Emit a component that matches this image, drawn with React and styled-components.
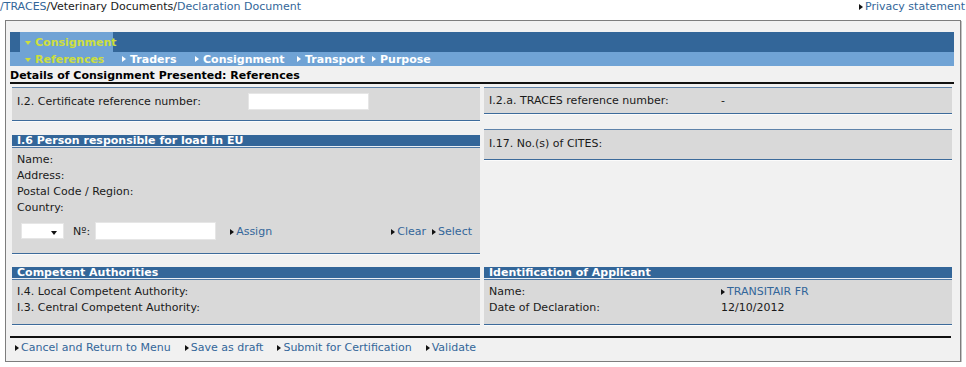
import React from 'react';
import styled, { createGlobalStyle, css } from 'styled-components';

const GlobalStyle = createGlobalStyle`
	body {
		margin: 0;
		background: #ffffff;
		font-family: 'DejaVu Sans', Verdana, sans-serif;
		font-size: 11px;
		color: #1a1a1a;
	}
`;

const LINK = '#336699';
const DARK = '#336699';
const LIGHT = '#70a3d5';
const ACTIVE = '#cddf3c';

const arrowRight = (color) => css`
	content: '';
	display: inline-block;
	width: 0;
	height: 0;
	border-top: 3.5px solid transparent;
	border-bottom: 3.5px solid transparent;
	border-left: 4px solid ${color};
	margin-right: 2px;
	vertical-align: 0px;
`;

const App = () => {
	return (
		<>
			<GlobalStyle />
			<TopBar>
				<Crumbs>
					<Link>/TRACES</Link>/Veterinary Documents/
					<Link>Declaration Document</Link>
				</Crumbs>
				<ArrowLink>Privacy statement</ArrowLink>
			</TopBar>

			<Frame>
				<NavMain>
					<NavTab>
						<DownArrow />
						Consignment
					</NavTab>
				</NavMain>
				<NavSub>
					<NavItem $active>
						<DownArrow />
						References
					</NavItem>
					<NavItem $w={73}>Traders</NavItem>
					<NavItem $w={102}>Consignment</NavItem>
					<NavItem $w={75}>Transport</NavItem>
					<NavItem>Purpose</NavItem>
				</NavSub>

				<PageTitle>Details of Consignment Presented: References</PageTitle>

				<Columns>
					<Box $bottom={10}>
						<FieldRow>
							<Label $w={231}>I.2. Certificate reference number:</Label>
							<TextInput $w={121} />
						</FieldRow>
					</Box>
					<Box $bottom={4}>
						<FieldRow>
							<Label $w={232}>I.2.a. TRACES reference number:</Label>
							<span>-</span>
						</FieldRow>
					</Box>

					<Section $top={14}>
						<SectionHeader>I.6 Person responsible for load in EU</SectionHeader>
						<SectionBody $bottom={13}>
							<Line>Name:</Line>
							<Line>Address:</Line>
							<Line>Postal Code / Region:</Line>
							<Line>Country:</Line>
							<ControlRow>
								<Select>
									<SelectCaret />
								</Select>
								<NoLabel>Nº:</NoLabel>
								<TextInput $w={121} $h={18} />
								<ArrowLink $ml={14}>Assign</ArrowLink>
								<Spacer />
								<ArrowLink>Clear</ArrowLink>
								<ArrowLink $ml={6}>Select</ArrowLink>
							</ControlRow>
						</SectionBody>
					</Section>
					<Box $top={8} $pad={6} $bottom={7}>
						<Line>I.17. No.(s) of CITES:</Line>
					</Box>

					<Section $top={13}>
						<SectionHeader>Competent Authorities</SectionHeader>
						<SectionBody $bottom={8}>
							<Line>I.4. Local Competent Authority:</Line>
							<Line>I.3. Central Competent Authority:</Line>
						</SectionBody>
					</Section>
					<Section $top={13}>
						<SectionHeader>Identification of Applicant</SectionHeader>
						<SectionBody $bottom={8}>
							<FieldRow>
								<Label $w={232}>Name:</Label>
								<ArrowLink>TRANSITAIR FR</ArrowLink>
							</FieldRow>
							<FieldRow>
								<Label $w={232}>Date of Declaration:</Label>
								<span>12/10/2012</span>
							</FieldRow>
						</SectionBody>
					</Section>
				</Columns>

				<Footer>
					<ArrowLink>Cancel and Return to Menu</ArrowLink>
					<ArrowLink>Save as draft</ArrowLink>
					<ArrowLink>Submit for Certification</ArrowLink>
					<ArrowLink>Validate</ArrowLink>
				</Footer>
			</Frame>
		</>
	);
};

const TopBar = styled.div`
	display: flex;
	justify-content: space-between;
	align-items: center;
	height: 14px;
	line-height: 14px;
	padding-right: 1px;
`;

const Crumbs = styled.div`
	color: #1a1a1a;
`;

const Link = styled.span`
	color: ${LINK};
`;

const ArrowLink = styled.span`
	color: ${LINK};
	white-space: nowrap;
	margin-left: ${(p) => p.$ml || 0}px;

	&::before {
		${arrowRight('#111')}
	}
`;

const Frame = styled.div`
	margin: 6px 5px 0 5px;
	padding: 11px 6px 6px 4px;
	background: #f1f1f1;
	border: 1px solid #7d7d7d;
	box-shadow: 1px 1px 0 #c4c4c4;
`;

const NavMain = styled.div`
	display: flex;
	height: 20px;
	background: ${DARK};
	padding-left: 10px;
`;

const NavTab = styled.div`
	display: flex;
	align-items: center;
	width: 88px;
	padding-left: 5px;
	background: ${LIGHT};
	color: ${ACTIVE};
	font-weight: bold;
`;

const DownArrow = styled.span`
	display: inline-block;
	width: 0;
	height: 0;
	border-left: 3.5px solid transparent;
	border-right: 3.5px solid transparent;
	border-top: 4px solid currentColor;
	margin-right: 4px;
	margin-top: 1px;
`;

const NavSub = styled.div`
	display: flex;
	align-items: center;
	height: 14px;
	background: ${LIGHT};
	padding-left: 15px;
	color: #ffffff;
	font-weight: bold;
`;

const NavItem = styled.div`
	display: flex;
	align-items: center;
	width: ${(p) => (p.$w ? `${p.$w}px` : 'auto')};
	${(p) =>
		p.$active
			? css`
					color: ${ACTIVE};
					width: 97px;
			  `
			: css`
					&::before {
						${arrowRight('#ffffff')}
						margin-right: 4px;
					}
			  `}
`;

const PageTitle = styled.div`
	height: 18px;
	padding-top: 3px;
	line-height: 14px;
	font-weight: bold;
	color: #000;
	border-bottom: 2px solid #111;
	box-sizing: border-box;
`;

const Columns = styled.div`
	display: grid;
	grid-template-columns: 468px 468px;
	column-gap: 4px;
	align-items: start;
	margin-left: 2px;
	padding-top: 3px;
`;

const Box = styled.div`
	margin-top: ${(p) => p.$top || 0}px;
	padding: ${(p) => p.$pad || 5}px 5px ${(p) => p.$bottom || 5}px 5px;
	background: #d9d9d9;
	border-top: 1px solid #5f83aa;
	border-bottom: 1px solid #3d6b9b;
	box-shadow: 0 1px 0 #fbfbfb;
`;

const FieldRow = styled.div`
	display: flex;
	align-items: center;
	min-height: 14px;
	line-height: 16px;
`;

const Label = styled.span`
	width: ${(p) => p.$w}px;
	flex-shrink: 0;
`;

const TextInput = styled.div`
	width: ${(p) => p.$w}px;
	height: ${(p) => p.$h || 17}px;
	background: #ffffff;
	border: 1px solid #e6e6e6;
	box-sizing: border-box;
`;

const Section = styled.div`
	margin-top: ${(p) => p.$top || 0}px;
`;

const SectionHeader = styled.div`
	height: 11px;
	line-height: 11px;
	padding-left: 5px;
	background: ${DARK};
	color: #ffffff;
	font-weight: bold;
	border-bottom: 1px solid #e9eef4;
`;

const SectionBody = styled.div`
	padding: 4px 8px ${(p) => p.$bottom || 8}px 5px;
	background: #d9d9d9;
	border-top: 1px solid #4f78a3;
	border-bottom: 1px solid #3d6b9b;
	box-shadow: 0 1px 0 #fbfbfb;
`;

const Line = styled.div`
	line-height: 16px;
`;

const ControlRow = styled.div`
	display: flex;
	align-items: center;
	margin-top: 6px;
	height: 18px;
	padding-left: 4px;
`;

const Select = styled.div`
	position: relative;
	width: 43px;
	height: 16px;
	background: #ffffff;
	border: 1px solid #e6e6e6;
	box-sizing: border-box;
`;

const SelectCaret = styled.span`
	position: absolute;
	right: 6px;
	top: 7px;
	width: 0;
	height: 0;
	border-left: 3.5px solid transparent;
	border-right: 3.5px solid transparent;
	border-top: 4px solid #111;
`;

const NoLabel = styled.span`
	margin: 0 5px 0 9px;
`;

const Spacer = styled.div`
	flex: 1;
`;

const Footer = styled.div`
	display: flex;
	margin-top: 11px;
	margin-right: 3px;
	padding: 3px 0 0 5px;
	line-height: 14px;
	border-top: 2px solid #111;

	& > span {
		margin-right: 14px;
	}
`;

export default App;
